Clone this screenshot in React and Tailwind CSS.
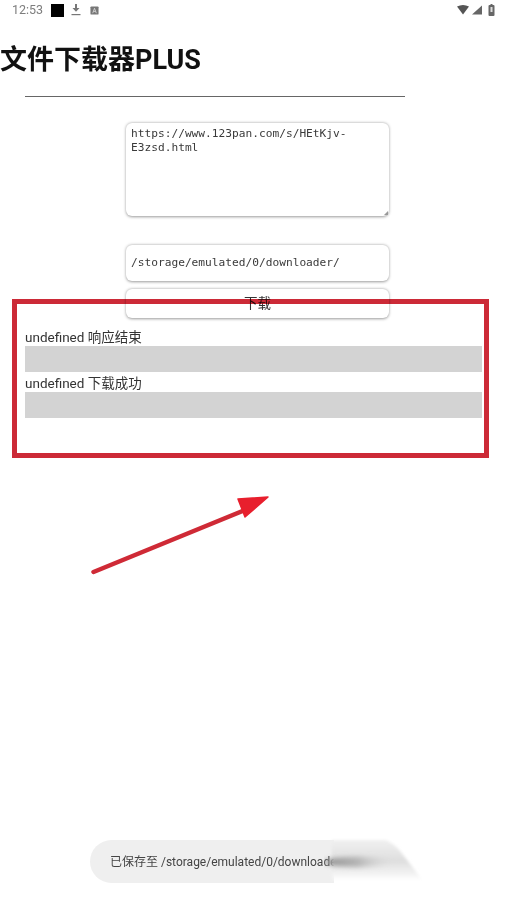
import React from "react";

const cjk = '"Roboto","Noto Sans CJK SC",sans-serif';

function StatusBar() {
  return (
    <div className="h-[20px] flex items-center justify-between pl-[12px] pr-[12px] text-[#7d7d7d]">
      <div className="flex items-center">
        <span className="text-[12.5px] leading-none font-['Roboto']">12:53</span>
        <span className="w-[13px] h-[13px] bg-black ml-[8px] mt-[1px]" />
        <svg className="ml-[7px]" width="10" height="12" viewBox="0 0 10 12" fill="#777">
          <path d="M4 0h2v4h2.500L5 7.800 1.500 4H4z" />
          <rect x="0.500" y="10" width="9" height="1.200" />
        </svg>
        <svg className="ml-[9px]" width="9" height="9" viewBox="0 0 10 10">
          <rect x="0.500" y="0.500" width="9" height="9" rx="1" fill="#777" />
          <path d="M3 8 5 2.500 7 8M3.800 6h2.400" stroke="#ddd" strokeWidth="0.900" fill="none" />
        </svg>
      </div>
      <div className="flex items-center">
        <svg width="12" height="10" viewBox="0 0 12 10" fill="#555">
          <path d="M0 1.500Q6-1.500 12 1.500L6 9.500z" />
        </svg>
        <svg className="ml-[3px]" width="10" height="10" viewBox="0 0 11 10" fill="#666">
          <path d="M11 0v10H0z" />
        </svg>
        <svg className="ml-[6px]" width="7" height="12" viewBox="0 0 6 12">
          <rect x="0" y="1" width="6" height="11" rx="1" fill="#666" />
          <rect x="2" y="0" width="2" height="1" fill="#666" />
          <rect x="2" y="3" width="2" height="5" fill="#ddd" />
        </svg>
      </div>
    </div>
  );
}

function LogRow({ text }) {
  return (
    <div>
      <div className="h-[20px] text-[13.5px] leading-[20px] text-[#333] font-['Roboto','Noto_Sans_CJK_SC',sans-serif]">
        <span className="relative top-[1px]">{text}</span>
      </div>
      <div className="h-[26px] bg-[#d3d3d3]" />
    </div>
  );
}

export default function App() {
  return (
    <div className="relative w-[507px] h-[903px] bg-white overflow-hidden" style={{ fontFamily: cjk }}>
      <StatusBar />

      <h1 className="mt-[24px] h-[32px] text-[27px] leading-[32px] font-bold text-[#111]">
        文件下载器PLUS
      </h1>

      <div className="mt-[20px] ml-[25px] w-[380px] h-[1px] bg-[#666]" />

      <div className="mt-[26px] ml-[126px] w-[263px] flex flex-col">
        <div className="relative h-[93px]">
          <textarea
            readOnly
            value="https://www.123pan.com/s/HEtKjv-E3zsd.html"
            className="block w-full h-full resize-none rounded-[6px] bg-white px-[5px] py-[4px] text-[11.2px] leading-[13.5px] text-[#3a3a3a] outline-none shadow-[0_0.5px_3px_rgba(0,0,0,0.4)] font-['DejaVu_Sans_Mono',monospace]"
          />
          <svg className="absolute right-[1px] bottom-[1px]" width="4" height="4" viewBox="0 0 4 4">
            <path d="M4 0 0 4h4z" fill="#999" />
          </svg>
        </div>
        <input
          readOnly
          value="/storage/emulated/0/downloader/"
          className="mt-[29px] h-[36px] rounded-[6px] bg-white px-[5px] pb-[1px] text-[11.2px] text-[#3a3a3a] outline-none shadow-[0_0.5px_3px_rgba(0,0,0,0.4)] font-['DejaVu_Sans_Mono',monospace]"
        />
        <button className="mt-[8px] h-[29px] rounded-[6px] bg-white pb-[3px] text-[13.5px] leading-[16px] text-[#333] shadow-[0_0.5px_3px_rgba(0,0,0,0.4)] font-['Noto_Sans_CJK_SC',sans-serif]">
          下载
        </button>
      </div>

      <div className="mt-[8px] mx-[25px] flex flex-col">
        <LogRow text="undefined 响应结束" />
        <LogRow text="undefined 下载成功" />
      </div>

      {/* red annotation rectangle */}
      <div className="absolute left-[12px] top-[299px] w-[477px] h-[159px] border-[5px] border-[#cc2a37] mix-blend-multiply" />

      {/* red annotation arrow */}
      <svg className="absolute left-[80px] top-[485px]" width="200" height="100" viewBox="0 0 200 100">
        <line x1="13.500" y1="87" x2="170" y2="23" stroke="#cf2a36" strokeWidth="4.500" strokeLinecap="round" />
        <path d="M158 14 188 12 165 32z" fill="#e81f2d" stroke="#e81f2d" strokeWidth="1.500" strokeLinejoin="round" />
      </svg>

      {/* toast with smear */}
      <div className="absolute left-[90px] top-[840px] w-[244px] h-[43px] rounded-l-[22px] bg-[#efefef] flex items-center pl-[20px] overflow-hidden whitespace-nowrap text-[12px] text-[#444]">
        已保存至 /storage/emulated/0/downloader/
      </div>
      <svg className="absolute left-[324px] top-[830px]" width="110" height="65" viewBox="0 0 110 65">
        <defs>
          <filter id="soft" x="-30%" y="-60%" width="160%" height="220%">
            <feGaussianBlur stdDeviation="2.500" />
          </filter>
          <filter id="edge" x="-10%" y="-10%" width="120%" height="120%">
            <feGaussianBlur stdDeviation="1.500" />
          </filter>
          <linearGradient id="fade" x1="0" y1="0" x2="1" y2="0">
            <stop offset="0" stopColor="#8f8f8f" />
            <stop offset="0.500" stopColor="#b5b5b5" />
            <stop offset="1" stopColor="#d8d8d8" stopOpacity="0" />
          </linearGradient>
          <linearGradient id="band" x1="0" y1="0" x2="0" y2="1">
            <stop offset="0" stopColor="#f0f0f0" />
            <stop offset="0.500" stopColor="#dedede" />
            <stop offset="0.850" stopColor="#f6f6f6" />
            <stop offset="1" stopColor="#ffffff" stopOpacity="0" />
          </linearGradient>
        </defs>
        <path d="M8 10H62Q70 14 76 21L100 52H8z" fill="url(#band)" filter="url(#edge)" />
        <ellipse cx="34" cy="32" rx="34" ry="5" fill="url(#fade)" filter="url(#soft)" />
      </svg>
    </div>
  );
}
